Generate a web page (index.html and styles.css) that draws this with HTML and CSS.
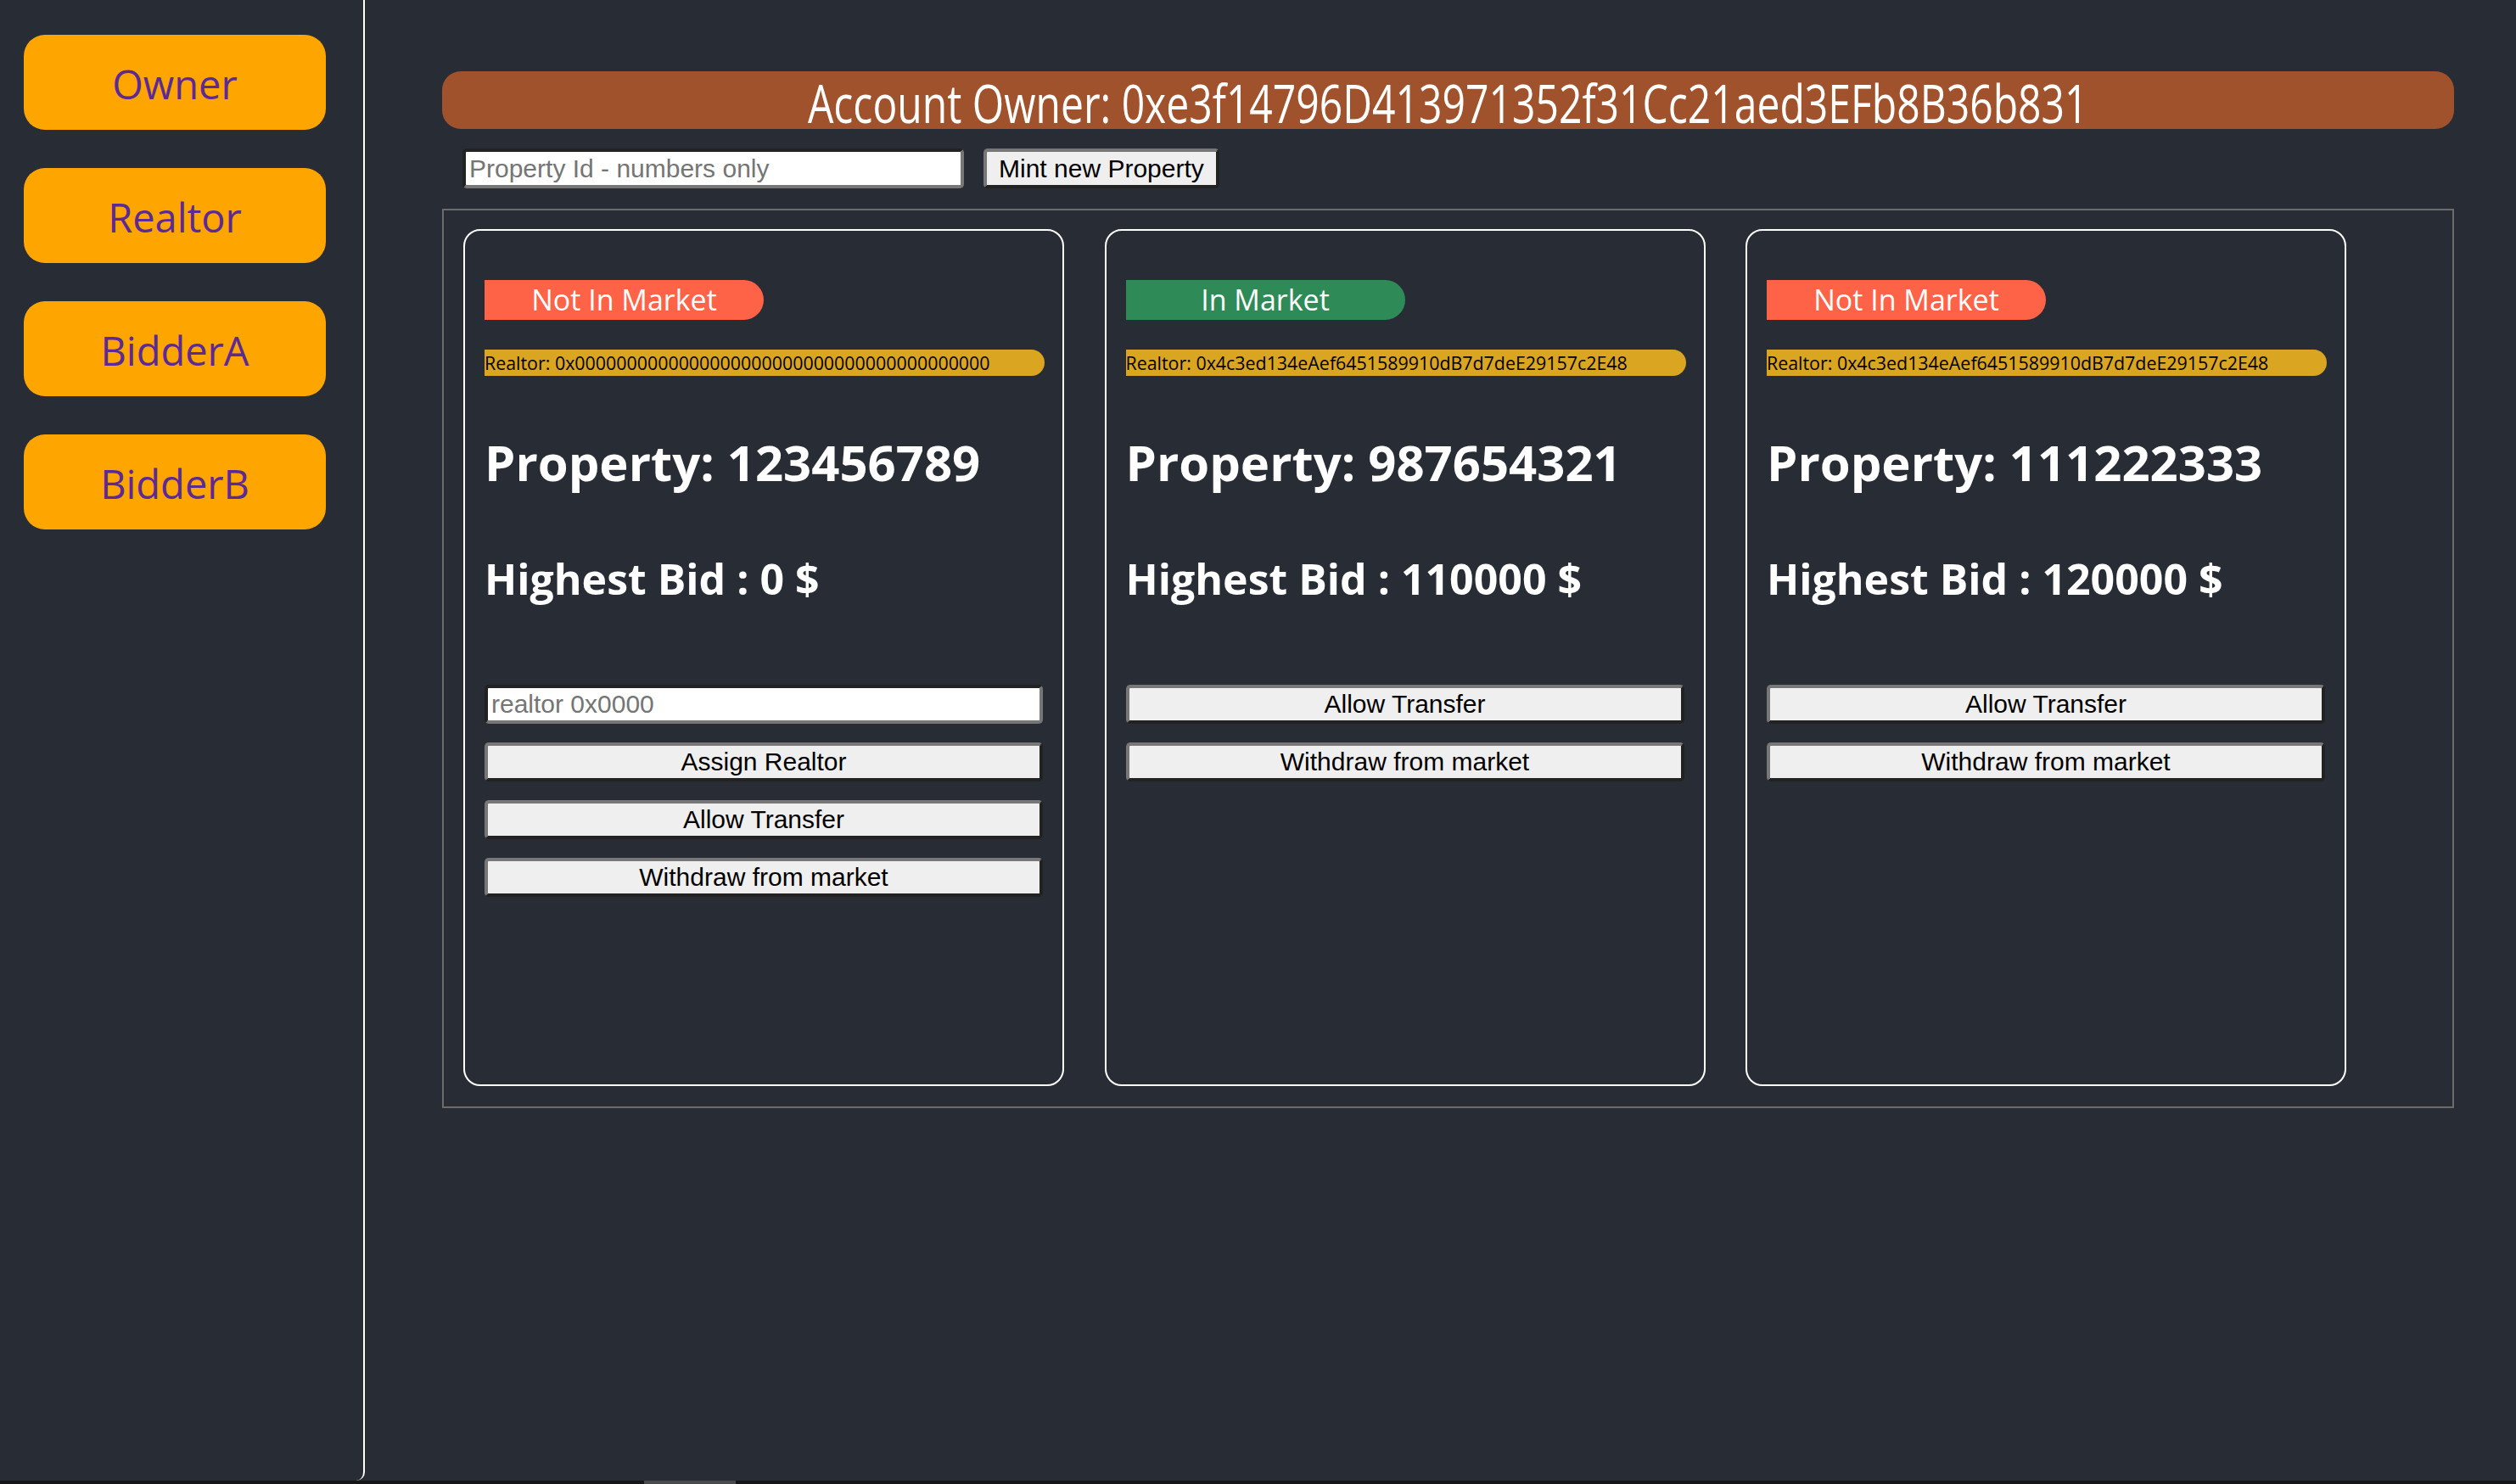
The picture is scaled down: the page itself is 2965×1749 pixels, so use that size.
FILE: index.html
```html
<!DOCTYPE html>
<html lang="en">
<head>
<meta charset="utf-8">
<title>Real Estate Auction</title>
<link rel="stylesheet" href="styles.css">
</head>
<body>
<div class="app">
  <div class="layout">
    <aside class="sidebar">
      <button class="role">Owner</button>
      <button class="role">Realtor</button>
      <button class="role">BidderA</button>
      <button class="role">BidderB</button>
    </aside>
    <main class="main">
      <div class="account"><span class="account-text">Account Owner: 0xe3f14796D413971352f31Cc21aed3EFb8B36b831</span></div>
      <div class="mint-row">
        <input class="field mint-input" type="text" placeholder="Property Id - numbers only">
        <button class="btn mint-btn">Mint new Property</button>
      </div>
      <section class="board">
        <article class="card">
          <div class="status not-in">Not In Market</div>
          <div class="realtor">Realtor: 0x0000000000000000000000000000000000000000</div>
          <h2 class="prop">Property: 123456789</h2>
          <h3 class="bid">Highest Bid : 0 $</h3>
          <div class="actions">
            <input class="field" type="text" placeholder="realtor 0x0000">
            <button class="btn">Assign Realtor</button>
            <button class="btn">Allow Transfer</button>
            <button class="btn">Withdraw from market</button>
          </div>
        </article>
        <article class="card">
          <div class="status in">In Market</div>
          <div class="realtor">Realtor: 0x4c3ed134eAef6451589910dB7d7deE29157c2E48</div>
          <h2 class="prop">Property: 987654321</h2>
          <h3 class="bid">Highest Bid : 110000 $</h3>
          <div class="actions">
            <button class="btn">Allow Transfer</button>
            <button class="btn">Withdraw from market</button>
          </div>
        </article>
        <article class="card">
          <div class="status not-in">Not In Market</div>
          <div class="realtor">Realtor: 0x4c3ed134eAef6451589910dB7d7deE29157c2E48</div>
          <h2 class="prop">Property: 111222333</h2>
          <h3 class="bid">Highest Bid : 120000 $</h3>
          <div class="actions">
            <button class="btn">Allow Transfer</button>
            <button class="btn">Withdraw from market</button>
          </div>
        </article>
      </section>
    </main>
  </div>
  <div class="hscroll"><div class="hscroll-thumb"></div></div>
</div>
</body>
</html>
```
FILE: styles.css
```css
* { box-sizing: border-box; }

html, body {
  margin: 0;
  padding: 0;
  background: #282c34;
}

body {
  width: 2965px;
  height: 1749px;
  overflow: hidden;
  font-family: "Open Sans", "Noto Sans", sans-serif;
}

.app {
  display: flex;
  flex-direction: column;
  height: 1749px;
}

.layout {
  display: flex;
  height: 1745px;
}

.sidebar {
  width: 430px;
  flex: none;
  border-right: 2px solid #ffffff;
  border-bottom-right-radius: 10px;
  padding: 41px 0 0 28px;
  display: flex;
  flex-direction: column;
  gap: 45px;
}

.role {
  width: 356px;
  height: 112px;
  background: #ffa500;
  color: #5b2a96;
  border: none;
  border-radius: 25px;
  padding: 4px 0 0;
  font: 47px "Open Sans", "Noto Sans", sans-serif;
  display: flex;
  align-items: center;
  justify-content: center;
}

.main {
  flex: 1;
  padding: 84px 73px 0 91px;
}

.account {
  height: 68px;
  background: #a0522d;
  border-radius: 22px;
  display: flex;
  align-items: center;
  justify-content: center;
  padding-top: 6px;
  color: #ffffff;
}

.account-text {
  display: inline-block;
  font: 62px/1 "Open Sans", "Noto Sans", sans-serif;
  white-space: nowrap;
  transform: scaleX(0.775);
}

.mint-row {
  display: flex;
  gap: 23px;
  margin: 23px 0 0 24px;
}

.field {
  height: 47px;
  border: 4px solid;
  border-color: #222222 #777777 #777777 #222222;
  border-radius: 5px;
  background: #ffffff;
  font: 30px "Liberation Sans", Arial, sans-serif;
  color: #000000;
  padding: 0 4px;
  outline: none;
}

.field::placeholder { color: #757575; }

.mint-input { width: 591px; }

.btn {
  height: 47px;
  border: 4px solid;
  border-color: #777777 #222222 #222222 #777777;
  border-radius: 5px;
  background: #efefef;
  font: 30px "Liberation Sans", Arial, sans-serif;
  color: #000000;
  padding: 0 14px;
}

.board {
  margin-top: 24px;
  height: 1060px;
  border: 2px solid #6b6b6b;
  padding: 22px 23px;
  display: flex;
  gap: 47.5px;
  align-items: flex-start;
}

.card {
  width: 708px;
  height: 1010px;
  flex: none;
  border: 2px solid #ffffff;
  border-radius: 20px;
  padding: 58px 23px 0;
}

.status {
  width: 329px;
  height: 47px;
  border-radius: 0 24px 24px 0;
  font: 34px/47px "Open Sans", "Noto Sans", sans-serif;
  color: #ffffff;
  text-align: center;
}

.not-in { background: #ff6347; }
.in { background: #2e8b57; }

.realtor {
  margin-top: 35px;
  width: 660px;
  height: 31px;
  background: #daa520;
  border-radius: 0 16px 16px 0;
  font: 21.4px/31px "Open Sans", "Noto Sans", sans-serif;
  color: #000000;
  white-space: nowrap;
}

.prop {
  margin: 73px 0 0;
  font: 700 58px/1 "Open Sans", "Noto Sans", sans-serif;
  color: #ffffff;
  white-space: nowrap;
}

.bid {
  margin: 83px 0 0;
  font: 700 50px/1 "Open Sans", "Noto Sans", sans-serif;
  color: #ffffff;
  white-space: nowrap;
}

.actions {
  margin-top: 100px;
  display: flex;
  flex-direction: column;
  gap: 22px;
}

.actions .field,
.actions .btn {
  width: 658px;
  height: 46px;
}

.hscroll {
  height: 4px;
  background: #161616;
}

.hscroll-thumb {
  margin-left: 759px;
  width: 108px;
  height: 4px;
  background: #4a4a4a;
}
```
